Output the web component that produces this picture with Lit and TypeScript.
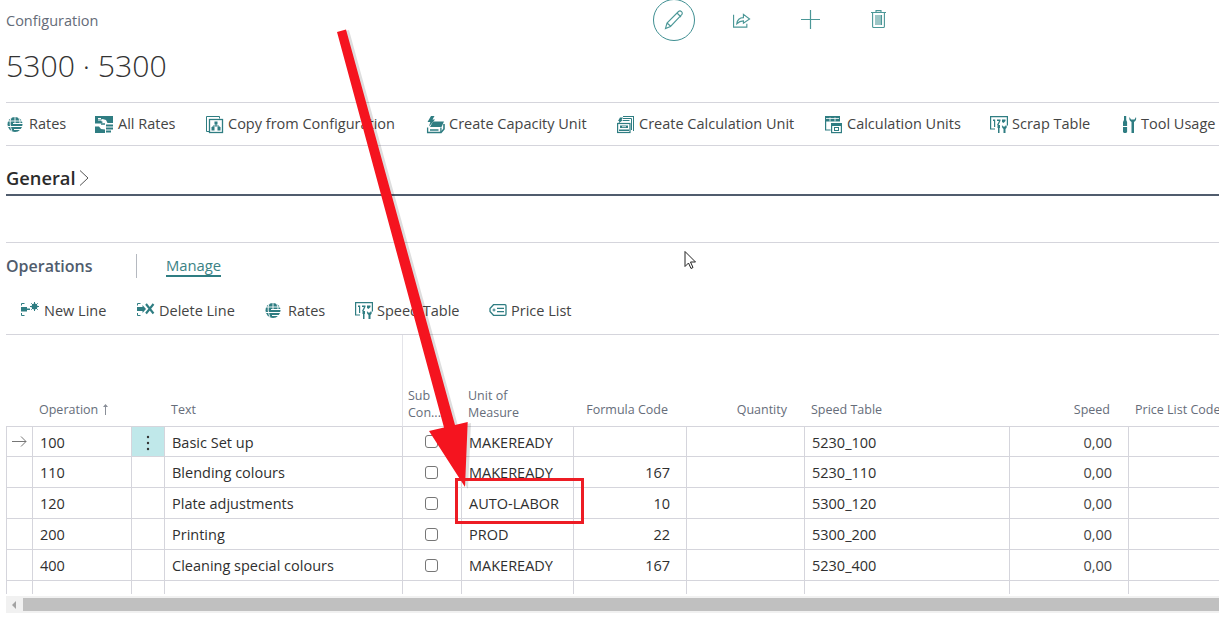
import { LitElement, html, css, svg } from 'lit';
import { customElement } from 'lit/decorators.js';

const icons: Record<string, unknown> = {
  globe: svg`<circle cx="8" cy="8.500" r="7.500" fill="currentColor"/><path d="M1 5h14M4 1.500c-1.500 4-1 9 1 14M11 1c1.500 2 2 4 2 6M8 1v6" fill="none" stroke="#fff" stroke-width=".9"/><path d="M6 7.500h10M1 10.500h5M6 10.500h10M7 13.500h7" stroke="#fff" stroke-width="1.100"/>`,
  allRates: svg`<path d="M0 0h18v7h-5.500L11 4 7.500 3 6 5l2 1-2 1.500H0z" fill="currentColor"/><path d="M0 10.500h4l2 2.500 4 .5V17H0z" fill="currentColor"/><path d="M11 8.500h7v2h-7zM11 11.500h7v2h-7zM11 14.500h5v2h-5z" fill="currentColor"/><path d="M3 4h5M3 2.500h3" stroke="#fff"/><path d="M6 8h4" stroke="currentColor" stroke-width="1.500"/>`,
  copy: svg`<path d="M3.500 15.500H.5V.5h13v2" fill="none" stroke="currentColor"/><rect x="3.500" y="3.500" width="13" height="13" fill="none" stroke="currentColor" stroke-width="1.300"/><path d="M8.500 5.500h3v3h-3zM5.500 11h3v3.500h-3zM11.500 11h3v3.500h-3z" fill="currentColor"/><path d="M10 8v2M7 11v-1h6v1" fill="none" stroke="currentColor"/>`,
  capacity: svg`<path d="M4 0h3.500L5.500 3.500H8L2 10.500l1.300-4.500H.5z" fill="currentColor"/><path d="M6 5.500h11l-2.500 5.500H3z" fill="currentColor"/><path d="M.6 11.500v5h13.300v-5M3 14h8.500" fill="none" stroke="currentColor" stroke-width="1.300"/><path d="M14 16.500l3-3.500V8" fill="none" stroke="currentColor" stroke-width="1.600"/>`,
  calc: svg`<path d="M6 0h11v15h-1V1H6z" fill="currentColor"/><path d="M6 2.500h8.500V14M6 4.500h6.500" stroke="currentColor" fill="none"/><path d="M3 1.500h3L4.500 4H6L1.500 7.500 2.300 5H1z" fill="currentColor"/><rect x=".6" y="7.500" width="12.400" height="9" fill="none" stroke="currentColor" stroke-width="1.200"/><path d="M3 9.500h8V12H3zM2 13.500h10v1.500H2z" fill="currentColor"/><path d="M5 10.700h4" stroke="#fff" stroke-width=".8"/>`,
  units: svg`<path d="M0 0h15v5.500H0z" fill="currentColor"/><path d="M.6 5v9h5" fill="none" stroke="currentColor" stroke-width="1.200"/><rect x="6.600" y="7.600" width="9.800" height="9" fill="#fff" stroke="currentColor" stroke-width="1.200"/><path d="M6 7h11v3H6z" fill="currentColor"/><rect x="9.500" y="11.500" width="4" height="3" fill="none" stroke="currentColor"/><path d="M5 1.500v4M10 1.500v4M1 2.500h13" stroke="#fff" stroke-width=".8"/>`,
  scrap: svg`<path d="M5 13H.6V.6h16.800v9" fill="none" stroke="currentColor" stroke-width="1.200"/><path d="M3 3.500h2.200V11H4V5H3zM7 3.500h3.500v1.200L8.500 9H7l2-4H7zM12 3.500h3.500v1.500L13.500 7 12 6z" fill="currentColor"/><path d="M7.500 9H10v3h-.5v5H8v-5h-.5zM12 9l1 1.500h2L16 9c1 1 1.200 3-.5 4v4h-2v-4c-1.700-1-1.700-3-1.500-4z" fill="currentColor"/>`,
  tool: svg`<path d="M2 0h2.200v4l.9 2v4H1V6l1-2z" fill="currentColor"/><path d="M1 11h4.100v5l-1 1H2l-1-1z" fill="currentColor"/><path d="M7.500 1c-.5 2 0 4 2 5v11h2.500V6c2-1 2.500-3 2-5l-1.500 2.500h-3.500z" fill="currentColor"/>`,
  newLine: svg`<path d="M3.500 1.500H.5v2M.5 11v2.500h3" fill="none" stroke="currentColor"/><path d="M0 5h6v1.500h3v1.500H6v1.500H0z" fill="currentColor"/><circle cx="13.500" cy="4.500" r="2.300" fill="none" stroke="currentColor" stroke-width="1.300"/><path d="M13.500 0v9M9 4.500h9M10.300 1.300l6.400 6.400M16.700 1.300l-6.400 6.400" stroke="currentColor"/>`,
  deleteLine: svg`<path d="M3.500 1.500H.5v2M.5 11v2.500h3" fill="none" stroke="currentColor"/><path d="M0 5h5.500V3l3.500 4-3.500 4V9H0z" fill="currentColor"/><path d="M9 2l7.500 9.500M16.500 2L9 11.500" stroke="currentColor" stroke-width="2.100"/>`,
  price: svg`<path d="M4.500 2.700h11.500c.6 0 1 .4 1 1v8.600c0 .6-.4 1-1 1H4.500L1 9.500V6.500z" fill="none" stroke="currentColor" stroke-width="1.300"/><path d="M8 6.300h7M8 9.700h7" stroke="currentColor" stroke-width="1.200"/><path d="M3.500 8h3M5 6.500v3" stroke="currentColor"/>`,
};

const topActions = [
  { icon: 'globe', label: 'Rates', w: 17 },
  { icon: 'allRates', label: 'All Rates', w: 18 },
  { icon: 'copy', label: 'Copy from Configuration', w: 17 },
  { icon: 'capacity', label: 'Create Capacity Unit', w: 17 },
  { icon: 'calc', label: 'Create Calculation Unit', w: 17 },
  { icon: 'units', label: 'Calculation Units', w: 17 },
  { icon: 'scrap', label: 'Scrap Table', w: 17 },
  { icon: 'tool', label: 'Tool Usage', w: 14 },
];

const lineActions = [
  { icon: 'newLine', label: 'New Line', w: 18 },
  { icon: 'deleteLine', label: 'Delete Line', w: 17 },
  { icon: 'globe', label: 'Rates', w: 18 },
  { icon: 'scrap', label: 'Speed Table', w: 17 },
  { icon: 'price', label: 'Price List', w: 17 },
];

const rows = [
  ['100', 'Basic Set up', 'MAKEREADY', '', '5230_100'],
  ['110', 'Blending colours', 'MAKEREADY', '167', '5230_110'],
  ['120', 'Plate adjustments', 'AUTO-LABOR', '10', '5300_120'],
  ['200', 'Printing', 'PROD', '22', '5300_200'],
  ['400', 'Cleaning special colours', 'MAKEREADY', '167', '5230_400'],
  ['', '', '', '', ''],
];

@customElement('app-root')
export class AppRoot extends LitElement {
  static styles = css`
    :host {
      display: block;
      position: relative;
      width: 1219px;
      height: 631px;
      overflow: hidden;
      background: #fff;
      font-family: 'Open Sans', 'Noto Sans', sans-serif;
      font-size: 14.5px;
      color: #333;
      box-sizing: border-box;
      padding-left: 6px;
    }
    svg.ic {
      color: #2f7d82;
      flex: none;
      display: block;
      overflow: visible;
    }
    .head {
      display: flex;
      height: 102px;
    }
    .titles {
      width: 647px;
      padding-top: 12px;
    }
    .crumb {
      font-size: 14.500px;
      line-height: 18px;
      color: #646b78;
    }
    h1 {
      margin: 15px 0 0;
      font-size: 30.200px;
      line-height: 41px;
      font-weight: 300;
      color: #333;
    }
    .tools {
      display: flex;
      height: 41px;
      color: #4b9797;
    }
    .edit {
      width: 40px;
      height: 40px;
      border: 1px solid #3f8f92;
      border-radius: 50%;
      margin-top: -1px;
      display: flex;
      align-items: center;
      justify-content: center;
      margin-right: 38px;
    }
    .tool {
      display: flex;
      align-items: center;
      height: 38px;
    }
    .tool.share {
      width: 68px;
    }
    .tool.plus {
      width: 70px;
    }
    .bar {
      display: grid;
      grid-template-columns: 88px 111px 221px 190px 208px 165px 132px 1fr;
      align-items: center;
      height: 42px;
      border-top: 1px solid #d5d5dc;
      border-bottom: 1px solid #d5d5dc;
      padding-left: 1px;
      white-space: nowrap;
      color: #444;
    }
    .act {
      display: flex;
      align-items: center;
      gap: 5px;
    }
    .act span {
      line-height: 18px;
    }
    .general {
      display: flex;
      align-items: flex-end;
      gap: 3px;
      height: 44px;
      padding-bottom: 4px;
      border-bottom: 2px solid #505c6d;
      font-size: 18.300px;
      font-weight: 600;
      color: #2b2b2b;
      line-height: 24px;
    }
    .general svg {
      margin-bottom: 4px;
    }
    .gap {
      height: 46px;
      border-bottom: 1px solid #d5d5dc;
    }
    .tabs {
      display: flex;
      align-items: center;
      height: 46px;
    }
    .tabs strong {
      width: 130px;
      font-size: 16px;
      font-weight: 600;
      color: #505c6d;
      border-right: 1px solid #b5b9c0;
      line-height: 24px;
      margin-right: 29px;
    }
    .tabs a {
      color: #3b8285;
      font-size: 14.800px;
      line-height: 19px;
      border-bottom: 2px solid #2f7d82;
    }
    .subbar {
      display: grid;
      grid-template-columns: 116px 128px 90px 134px 1fr;
      align-items: center;
      box-sizing: border-box;
      height: 46px;
      padding: 0 0 2px 15px;
      border-bottom: 1px solid #d5d5dc;
      white-space: nowrap;
      color: #444;
    }
    .grid {
      display: grid;
      grid-template-columns: 27px 99px 33px 238px 59px 112px 113px 118px 205px 119px 92px;
      height: 259px;
      overflow: hidden;
      align-content: start;
    }
    .th {
      height: 92px;
      box-sizing: border-box;
      border-bottom: 1px solid #d5d5dc;
      color: #666d7a;
      font-size: 12.500px;
      line-height: 17px;
      display: flex;
      align-items: flex-end;
      padding: 0 0 8px 6px;
      white-space: nowrap;
    }
    .th.tall {
      padding-bottom: 5px;
      white-space: pre-line;
    }
    .th.sub {
      padding-left: 5px;
    }
    .th.div {
      border-right: 1px solid #e4e4e9;
    }
    .th.end {
      justify-content: flex-end;
      padding-right: 19px;
    }
    .th.qty {
      padding-right: 18px;
    }
    .td {
      height: 31px;
      box-sizing: border-box;
      border-bottom: 1px solid #d5d5dc;
      border-right: 1px solid #d5d5dc;
      display: flex;
      align-items: center;
      padding: 1px 7px 0;
      color: #2f2f2f;
      white-space: nowrap;
      line-height: 18px;
    }
    .td.r0 {
      height: 30px;
      padding-top: 3px;
    }
    .td.first {
      border-left: 1px solid #d5d5dc;
      padding: 0 0 0 5px;
    }
    .td.end {
      justify-content: flex-end;
      padding-right: 16px;
    }
    .td.hot {
      background: #c0e8ea;
      justify-content: center;
      padding: 2px 0 0;
    }
    .td.center {
      justify-content: center;
      padding: 0 2px 0 0;
    }
    .td.num {
      color: #444;
    }
    .box {
      width: 11px;
      height: 11px;
      border: 1px solid #767676;
      border-radius: 3px;
    }
    .hscroll {
      display: flex;
      align-items: center;
      height: 17px;
      margin-top: 2px;
      background: #f1f1f1;
      position: relative;
    }
    .hscroll i {
      width: 0;
      height: 0;
      margin-left: 6px;
      border: 4px solid transparent;
      border-left-width: 0;
      border-right: 4px solid #a3a3a3;
    }
    .thumb {
      position: absolute;
      left: 17px;
      right: 0;
      top: 2px;
      bottom: 2px;
      background: #c0c0c0;
    }
    .overlay {
      position: absolute;
      left: 0;
      top: 0;
      pointer-events: none;
    }
  `;

  icon(name: string, w: number) {
    return html`<svg class="ic" width=${w} height="17" viewBox="0 0 ${w} 17">${icons[name]}</svg>`;
  }

  render() {
    return html`
      <div class="head">
        <div class="titles">
          <div class="crumb">Configuration</div>
          <h1>5300 · 5300</h1>
        </div>
        <div class="tools">
          <div class="edit">
            <svg width="20" height="20" viewBox="0 0 20 20" fill="none" stroke="currentColor" stroke-width="1.100">
              <path d="M1.500 18.500l1.500-5.500L14.500 1.500c1-.8 2-.8 3 .2s1 2 .2 3L6.500 16.500zM3 13l4 3.500M13 3l4 4"/>
            </svg>
          </div>
          <div class="tool share">
            <svg width="18" height="17" viewBox="0 0 19 17" fill="none" stroke="currentColor" stroke-width="1.200">
              <path d="M.6 3.500v13h14V13"/><path d="M4 13c.5-4 3-6.500 7-6.500V3l6.500 5-6.500 4.500V10c-3 0-5 1-7 3z"/>
            </svg>
          </div>
          <div class="tool plus">
            <svg width="19" height="19" viewBox="0 0 19 19" stroke="currentColor" stroke-width="1.200">
              <path d="M9.500 0v19M0 9.500h19"/>
            </svg>
          </div>
          <div class="tool">
            <svg width="15" height="18" viewBox="0 0 15 18" fill="none" stroke="currentColor" stroke-width="1.100">
              <path d="M0 2.500h15M5 2.500V.6h5v1.900M1.600 2.500v14c0 .6.400 1 1 1h9.800c.6 0 1-.4 1-1v-14"/>
              <path d="M5 5v10M7 5v10M9 5v10M10.500 5v10"/>
            </svg>
          </div>
        </div>
      </div>

      <div class="bar">
        ${topActions.map(a => html`<div class="act">${this.icon(a.icon, a.w)}<span>${a.label}</span></div>`)}
      </div>

      <div class="general">
        General
        <svg width="10" height="16" viewBox="0 0 10 16" fill="none" stroke="#555" stroke-width="1"><path d="M1 .5L9 8l-8 7.500"/></svg>
      </div>
      <div class="gap"></div>

      <div class="tabs">
        <strong>Operations</strong>
        <a>Manage</a>
      </div>
      <div class="subbar">
        ${lineActions.map(a => html`<div class="act">${this.icon(a.icon, a.w)}<span>${a.label}</span></div>`)}
      </div>

      <div class="grid">
        <div class="th"></div>
        <div class="th">Operation&nbsp;<svg width="7" height="11" viewBox="0 0 7 11" fill="#8a8f98" style="margin-bottom:3px"><path d="M3 11V3H1l2.500-3L6 3H4v8z"/></svg></div>
        <div class="th"></div>
        <div class="th div">Text</div>
        <div class="th tall sub">Sub
Con...</div>
        <div class="th tall">Unit of
Measure</div>
        <div class="th end">Formula Code</div>
        <div class="th end qty">Quantity</div>
        <div class="th">Speed Table</div>
        <div class="th end">Speed</div>
        <div class="th">Price List Code</div>

        ${rows.map(
          (r, i) => {
            const h = i === 0 ? 'r0' : '';
            return html`
            <div class="td first ${h}">
              ${i === 0
                ? html`<svg width="15" height="11" viewBox="0 0 15 11" fill="none" stroke="#767676"><path d="M0 5.500h14M9 .5l5 5-5 5"/></svg>`
                : ''}
            </div>
            <div class="td ${h}">${r[0]}</div>
            <div class="td ${h} ${i === 0 ? 'hot' : ''}">
              ${i === 0
                ? html`<svg width="4" height="16" viewBox="0 0 4 16" fill="#333"><circle cx="2" cy="2" r="1.200"/><circle cx="2" cy="8" r="1.200"/><circle cx="2" cy="14" r="1.200"/></svg>`
                : ''}
            </div>
            <div class="td ${h}">${r[1]}</div>
            <div class="td center ${h}">${r[0] ? html`<div class="box"></div>` : ''}</div>
            <div class="td ${h}">${r[2]}</div>
            <div class="td end ${h}">${r[3]}</div>
            <div class="td ${h}"></div>
            <div class="td ${h}">${r[4]}</div>
            <div class="td end num ${h}">${r[0] ? '0,00' : ''}</div>
            <div class="td ${h}"></div>
          `;
          }
        )}
      </div>
      <div class="hscroll"><i></i><div class="thumb"></div></div>

      <svg class="overlay" width="1219" height="631" viewBox="0 0 1219 631">
        <path d="M339 33L349 30L458 426L471 423L468 489L432 432L447 428z" fill="#000" opacity=".13"/>
        <path d="M337 32L346 29.500L455 425L467.700 422L465 487L429 431L444 427.500z" fill="#f5141f"/>
        <rect x="456.500" y="479.500" width="126" height="43" fill="none" stroke="#ed1c24" stroke-width="3"/>
        <path d="M685 251.500v15l3.500-3.500 2.500 5.500 2-1-2.500-5.500h5z" fill="#fff" stroke="#222" stroke-width="1"/>
      </svg>
    `;
  }
}
